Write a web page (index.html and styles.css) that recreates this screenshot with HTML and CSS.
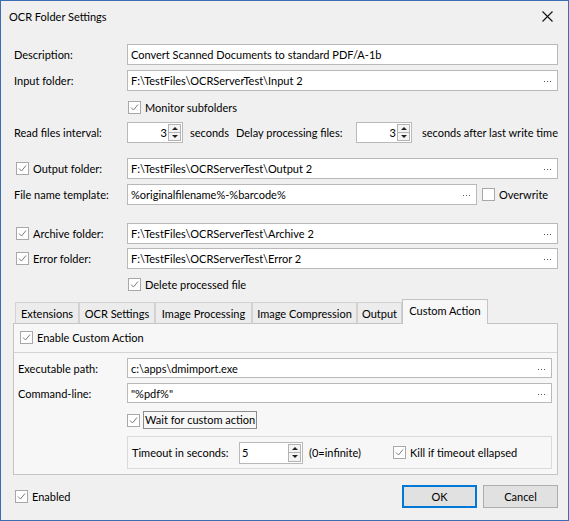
FILE: index.html
```html
<!DOCTYPE html>
<html>
<head>
<meta charset="utf-8">
<title>OCR Folder Settings</title>
<link rel="stylesheet" href="styles.css">
</head>
<body>
<div class="dlg">
  <div class="titlebar">
    <span class="title">OCR Folder Settings</span>
    <svg class="close" width="11" height="11" viewBox="0 0 11 11"><path d="M0.5 0.5 L10.5 10.5 M10.5 0.5 L0.5 10.5" stroke="#111" stroke-width="1.1" fill="none"/></svg>
  </div>

  <div class="content">
    <div class="row r-desc">
      <span class="lbl">Description:</span>
      <div class="edit">Convert Scanned Documents to standard PDF/A-1b</div>
    </div>
    <div class="row r-input">
      <span class="lbl">Input folder:</span>
      <div class="edit">F:\TestFiles\OCRServerTest\Input 2<svg class="dots" width="7" height="2" viewBox="0 0 7 2"><rect x="0" y="0" width="1" height="1"/><rect x="3" y="0" width="1" height="1"/><rect x="6" y="0" width="1" height="1"/></svg></div>
    </div>
    <div class="row cbrow r-monitor">
      <span class="cb"><svg width="11" height="11" viewBox="0 0 11 11"><path d="M2 5.5 L4.5 8 L9 2.5"/></svg></span>
      <span class="cbtext">Monitor subfolders</span>
    </div>
    <div class="row r-interval">
      <span class="lbl">Read files interval:</span>
      <div class="spin"><span class="val">3</span><span class="btns"><span class="up"></span><span class="down"></span></span></div>
      <span class="sec">seconds</span>
      <span class="delay">Delay processing files:</span>
      <div class="spin"><span class="val">3</span><span class="btns"><span class="up"></span><span class="down"></span></span></div>
      <span class="after">seconds after last write time</span>
    </div>
    <div class="row r-output">
      <span class="lbl cblbl"><span class="cb"><svg width="11" height="11" viewBox="0 0 11 11"><path d="M2 5.5 L4.5 8 L9 2.5"/></svg></span><span class="cbtext">Output folder:</span></span>
      <div class="edit">F:\TestFiles\OCRServerTest\Output 2<svg class="dots" width="7" height="2" viewBox="0 0 7 2"><rect x="0" y="0" width="1" height="1"/><rect x="3" y="0" width="1" height="1"/><rect x="6" y="0" width="1" height="1"/></svg></div>
    </div>
    <div class="row r-template">
      <span class="lbl">File name template:</span>
      <div class="edit tmpl">%originalfilename%-%barcode%<svg class="dots" width="7" height="2" viewBox="0 0 7 2"><rect x="0" y="0" width="1" height="1"/><rect x="3" y="0" width="1" height="1"/><rect x="6" y="0" width="1" height="1"/></svg></div>
      <span class="cb overwrite"></span>
      <span class="cbtext">Overwrite</span>
    </div>
    <div class="row r-archive">
      <span class="lbl cblbl"><span class="cb"><svg width="11" height="11" viewBox="0 0 11 11"><path d="M2 5.5 L4.5 8 L9 2.5"/></svg></span><span class="cbtext">Archive folder:</span></span>
      <div class="edit">F:\TestFiles\OCRServerTest\Archive 2<svg class="dots" width="7" height="2" viewBox="0 0 7 2"><rect x="0" y="0" width="1" height="1"/><rect x="3" y="0" width="1" height="1"/><rect x="6" y="0" width="1" height="1"/></svg></div>
    </div>
    <div class="row r-error">
      <span class="lbl cblbl"><span class="cb"><svg width="11" height="11" viewBox="0 0 11 11"><path d="M2 5.5 L4.5 8 L9 2.5"/></svg></span><span class="cbtext">Error folder:</span></span>
      <div class="edit">F:\TestFiles\OCRServerTest\Error 2<svg class="dots" width="7" height="2" viewBox="0 0 7 2"><rect x="0" y="0" width="1" height="1"/><rect x="3" y="0" width="1" height="1"/><rect x="6" y="0" width="1" height="1"/></svg></div>
    </div>
    <div class="row cbrow r-delete">
      <span class="cb"><svg width="11" height="11" viewBox="0 0 11 11"><path d="M2 5.5 L4.5 8 L9 2.5"/></svg></span>
      <span class="cbtext">Delete processed file</span>
    </div>

    <div class="tabctl">
      <div class="tabstrip">
        <span class="tab t1">Extensions</span>
        <span class="tab t2">OCR Settings</span>
        <span class="tab t3">Image Processing</span>
        <span class="tab t4">Image Compression</span>
        <span class="tab t5">Output</span>
        <span class="tab t6 active">Custom Action</span>
      </div>
      <div class="panel">
        <div class="enable-row">
          <span class="cb"><svg width="11" height="11" viewBox="0 0 11 11"><path d="M2 5.5 L4.5 8 L9 2.5"/></svg></span>
          <span class="cbtext">Enable Custom Action</span>
        </div>
        <div class="sub">
          <div class="prow p-exe">
            <span class="plbl">Executable path:</span>
            <div class="edit">c:\apps\dmimport.exe<svg class="dots" width="7" height="2" viewBox="0 0 7 2"><rect x="0" y="0" width="1" height="1"/><rect x="3" y="0" width="1" height="1"/><rect x="6" y="0" width="1" height="1"/></svg></div>
          </div>
          <div class="prow p-cmd">
            <span class="plbl">Command-line:</span>
            <div class="edit">"%pdf%"<svg class="dots" width="7" height="2" viewBox="0 0 7 2"><rect x="0" y="0" width="1" height="1"/><rect x="3" y="0" width="1" height="1"/><rect x="6" y="0" width="1" height="1"/></svg></div>
          </div>
          <div class="wait-row">
            <span class="cb"><svg width="11" height="11" viewBox="0 0 11 11"><path d="M2 5.5 L4.5 8 L9 2.5"/></svg></span>
            <span class="focus">Wait for custom action</span>
          </div>
          <div class="timeout">
            <span class="tlbl">Timeout in seconds:</span>
            <div class="spin tspin"><span class="val">5</span><span class="btns"><span class="up"></span><span class="down"></span></span></div>
            <span class="inf">(0=infinite)</span>
            <span class="cb kill"><svg width="11" height="11" viewBox="0 0 11 11"><path d="M2 5.5 L4.5 8 L9 2.5"/></svg></span>
            <span class="cbtext">Kill if timeout ellapsed</span>
          </div>
        </div>
      </div>
    </div>

    <div class="footer">
      <span class="cb enabled"><svg width="11" height="11" viewBox="0 0 11 11"><path d="M2 5.5 L4.5 8 L9 2.5"/></svg></span>
      <span class="cbtext">Enabled</span>
      <span class="spacer"></span>
      <span class="btn ok">OK</span>
      <span class="btn cancel">Cancel</span>
    </div>
  </div>
</div>
</body>
</html>
```

FILE: styles.css
```css
* { box-sizing: border-box; }
html, body { margin: 0; padding: 0; }
body {
  font-family: Lato, "Noto Sans", sans-serif;
  font-size: 11px;
  color: #000;
  background: #f0f0f0;
}
.dlg {
  width: 569px;
  height: 521px;
  border: 1px solid #3d6db3;
  background: #f0f0f0;
  display: flex;
  flex-direction: column;
}
.titlebar {
  height: 31px;
  flex: none;
  display: flex;
  align-items: center;
  justify-content: space-between;
  padding: 0 15px 0 8px;
  font-size: 11px;
}
.close { display: block; }

.content {
  padding: 0 10px 0 13px;
  display: flex;
  flex-direction: column;
}
.row {
  display: flex;
  align-items: center;
  height: 21px;
  flex: none;
}
.cbrow { height: 13px; padding-left: 114px; }
.lbl { width: 113px; flex: none; white-space: nowrap; display: flex; align-items: center; }
.cblbl { padding-left: 2px; }

.r-desc { margin-top: 12px; }
.r-input { margin-top: 5px; }
.r-monitor { margin-top: 10px; }
.r-interval { margin-top: 8px; }
.r-output { margin-top: 15px; }
.r-template { margin-top: 5px; }
.r-archive { margin-top: 18px; }
.r-error { margin-top: 4px; }
.r-delete { margin-top: 9px; }

.edit {
  flex: 1;
  height: 21px;
  border: 1px solid #b9b9b9;
  background: #fff;
  padding: 0 6px 0 3px;
  white-space: nowrap;
  display: flex;
  align-items: center;
  justify-content: space-between;
}
.edit.tmpl { flex: none; width: 350px; }
.dots { fill: #555; display: block; margin-top: 3px; }

.cb {
  width: 13px;
  height: 13px;
  flex: none;
  border: 1px solid #a8a8a8;
  background: #fff;
  display: flex;
  align-items: center;
  justify-content: center;
}
.cb svg { display: block; }
.cb path { fill: none; stroke: #7a7a7a; stroke-width: 1; }
.cbtext { margin-left: 4px; white-space: nowrap; }
.overwrite { margin-left: 5px; }

.spin {
  width: 56px;
  height: 21px;
  flex: none;
  border: 1px solid #b9b9b9;
  background: #fff;
  display: flex;
  align-items: stretch;
  padding: 0 1px 0 0;
}
.spin .val { flex: 1; text-align: right; padding-right: 1px; line-height: 19px; }
.btns {
  width: 13px;
  flex: none;
  display: flex;
  flex-direction: column;
  padding: 1px 0;
}
.btns .up, .btns .down {
  flex: 1;
  border: 1px solid #b3b3b3;
  background: #f4f4f4;
  display: flex;
  align-items: center;
  justify-content: center;
}
.btns .down { margin-top: -1px; }
.btns .up::after {
  content: "";
  width: 0; height: 0;
  border-left: 3px solid transparent;
  border-right: 3px solid transparent;
  border-bottom: 3px solid #222;
}
.btns .down::after {
  content: "";
  width: 0; height: 0;
  border-left: 3px solid transparent;
  border-right: 3px solid transparent;
  border-top: 3px solid #222;
}
.sec { width: 46px; margin-left: 7px; flex: none; }
.delay { width: 120px; flex: none; white-space: nowrap; }
.after { margin-left: 10px; white-space: nowrap; }

/* Tabs */
.tabctl { margin-top: 8px; margin-left: -1px; display: flex; flex-direction: column; }
.tabstrip {
  height: 24px;
  display: flex;
  align-items: flex-end;
  padding-left: 2px;
}
.tab {
  height: 21px;
  flex: none;
  border: 1px solid #d2d2d2;
  border-bottom: none;
  background: #ececec;
  display: flex;
  align-items: center;
  justify-content: center;
  white-space: nowrap;
}
.t1 { width: 64px; }
.t2 { width: 76px; }
.t3 { width: 97px; }
.t4 { width: 105px; }
.t5 { width: 45px; }
.t6 { width: 86px; }
.tab.active {
  height: 25px;
  margin-bottom: -1px;
  background: #f7f7f7;
  border-color: #c4c4c4;
  position: relative;
  z-index: 1;
  padding-bottom: 3px;
}
.panel {
  height: 152px;
  border: 1px solid #c4c4c4;
  background: #f7f7f7;
  display: flex;
  flex-direction: column;
}
.enable-row {
  height: 13px;
  margin-top: 7px;
  padding-left: 6px;
  display: flex;
  align-items: center;
}
.sub {
  margin-top: 8px;
  border-top: 1px solid #d4d4d4;
  padding: 0 5px 0 0;
  display: flex;
  flex-direction: column;
}
.prow { display: flex; align-items: center; height: 20px; margin-top: 5px; }
.prow .edit { height: 20px; }
.plbl { width: 113px; padding-left: 4px; flex: none; white-space: nowrap; }
.wait-row {
  height: 18px;
  margin-top: 8px;
  padding-left: 113px;
  display: flex;
  align-items: center;
}
.focus {
  margin-left: 3px;
  border: 1px solid #8c8c8c;
  height: 18px;
  line-height: 16px;
  padding: 0 1px;
  white-space: nowrap;
}
.timeout {
  margin: 7px 0 0 113px;
  height: 33px;
  border: 1px solid #dadada;
  display: flex;
  align-items: center;
  padding-left: 4px;
}
.tlbl { width: 107px; flex: none; white-space: nowrap; }
.tspin { width: 64px; height: 22px; }
.tspin .val { text-align: left; padding-left: 2px; line-height: 20px; }
.inf { margin-left: 6px; width: 84px; flex: none; white-space: nowrap; }
.kill { margin-left: 0; }

/* Footer */
.footer {
  margin-top: 10px;
  height: 23px;
  display: flex;
  align-items: center;
}
.enabled { margin-left: 1px; }
.spacer { flex: 1; }
.btn {
  width: 75px;
  height: 23px;
  flex: none;
  background: #e1e1e1;
  border: 1px solid #adadad;
  display: flex;
  align-items: center;
  justify-content: center;
}
.ok { border-color: #0078d7; box-shadow: inset 0 0 0 1px #0078d7; }
.cancel { margin-left: 6px; }
```
